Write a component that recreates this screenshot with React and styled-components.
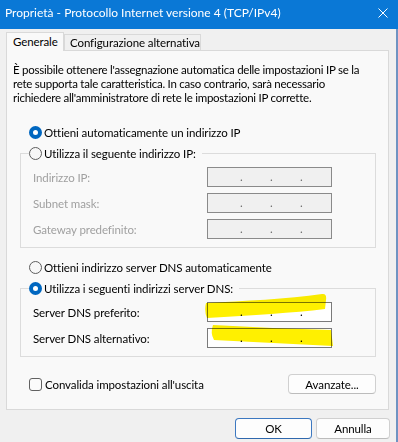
import React from "react";
import styled, { createGlobalStyle } from "styled-components";

const Global = createGlobalStyle`
  html, body {
    margin: 0;
    padding: 0;
    background: #f0f0f0;
  }
  body {
    font-family: "Lato", "Noto Sans", sans-serif;
    font-size: 11.5px;
    letter-spacing: -0.1px;
    white-space: nowrap;
    color: #000;
  }
`;

const Window = styled.div`
  width: 398px;
  height: 442px;
  display: flex;
  flex-direction: column;
  background: #f0f0f0;
  overflow: hidden;
`;

const TitleBar = styled.div`
  flex: none;
  height: 29px;
  box-sizing: border-box;
  display: flex;
  align-items: center;
  justify-content: space-between;
  padding: 0 10px 4px 5px;
  background: #0a78d6;
  color: #fff;
  font-size: 12px;
  letter-spacing: 0;
`;

const Body = styled.div`
  flex: 1;
  display: flex;
  flex-direction: column;
  padding: 3px 7px 0 6px;
  border-right: 2px solid #6f93c2;
`;

const Tabs = styled.div`
  display: flex;
  align-items: flex-end;
  height: 18px;
`;

const Tab = styled.div`
  box-sizing: border-box;
  width: ${(p) => p.$w}px;
  height: ${(p) => (p.$active ? 19 : 16)}px;
  display: flex;
  align-items: center;
  padding: ${(p) => (p.$active ? "0 0 1px 6px" : "0 0 0 5px")};
  margin-bottom: ${(p) => (p.$active ? -1 : 0)}px;
  border: 1px solid #d9d9d9;
  border-bottom: none;
  background: ${(p) => (p.$active ? "#f9f9f9" : "#f0f0f0")};
  position: relative;
  z-index: ${(p) => (p.$active ? 1 : 0)};
`;

const Panel = styled.div`
  display: flex;
  flex-direction: column;
  padding: 12px 0 15px 0;
  border: 1px solid #d9d9d9;
  background: #f9f9f9;
`;

const Description = styled.p`
  margin: 0 0 0 6px;
  line-height: 14px;
  letter-spacing: -0.25px;
`;

const OptionRow = styled.label`
  display: flex;
  align-items: center;
  gap: 2px;
  height: 16px;
  margin: ${(p) => p.$top}px 0 0 22px;
`;

const Radio = styled.span`
  box-sizing: border-box;
  width: 13px;
  height: 13px;
  border-radius: 50%;
  flex: none;
  border: ${(p) => (p.$checked ? "4px solid #0067c0" : "1px solid #5d5d5d")};
  background: ${(p) => (p.$checked ? "#fff" : "#f7f7f7")};
`;

const Group = styled.fieldset`
  margin: 5px 12px 0 13px;
  padding: 6px 12px 8px 12px;
  border: 1px solid #dcdcdc;
  min-width: 0;
  position: relative;
`;

const Legend = styled.legend`
  display: flex;
  align-items: center;
  gap: 2px;
  height: 16px;
  padding: 0 6px 0 0;
  margin-left: -4px;
`;

const Rows = styled.div`
  display: grid;
  grid-template-columns: 174px 125px;
  row-gap: 6px;
  align-items: center;
  position: relative;
`;

const FieldLabel = styled.span`
  color: ${(p) => (p.$disabled ? "#a0a0a0" : "#000")};
`;

const IpBox = styled.div`
  box-sizing: border-box;
  height: 20px;
  display: flex;
  align-items: center;
  padding-left: 4px;
  border: 1px solid ${(p) => (p.$disabled ? "#8a8a8a" : "#7a7a7a")};
  background: ${(p) => (p.$disabled ? "#f0f0f0" : "#fff")};
  color: ${(p) => (p.$disabled ? "#6d6d6d" : "#000")};
  line-height: 18px;
`;

const Octet = styled.span`
  width: 28px;
`;

const Dot = styled.span`
  width: 2px;
  text-align: center;
`;

const Highlight = styled.svg`
  position: absolute;
  left: 170px;
  top: -10px;
  width: 135px;
  height: 60px;
  mix-blend-mode: multiply;
  pointer-events: none;
`;

const BottomRow = styled.div`
  display: flex;
  align-items: center;
  justify-content: space-between;
  margin: 17px 12px 0 22px;
`;

const CheckLabel = styled.label`
  display: flex;
  align-items: center;
  gap: 3px;
`;

const Checkbox = styled.span`
  box-sizing: border-box;
  width: 13px;
  height: 13px;
  border: 1px solid #616161;
  border-radius: 3px;
  background: #fbfbfb;
`;

const Button = styled.button`
  box-sizing: border-box;
  width: ${(p) => p.$w}px;
  height: ${(p) => p.$h}px;
  padding: 0;
  font: inherit;
  letter-spacing: inherit;
  color: #000;
  background: #fdfdfd;
  border: 1px solid ${(p) => (p.$default ? "#3c78c0" : "#d0d0d0")};
  border-bottom-color: ${(p) => (p.$default ? "#2f68ad" : "#bcbcbc")};
  border-radius: 4px;
`;

const Footer = styled.div`
  display: flex;
  justify-content: flex-end;
  gap: 4px;
  margin: 8px -1px 0 0;
`;

function IpField({ disabled }) {
  return (
    <IpBox $disabled={disabled}>
      <Octet />
      <Dot>.</Dot>
      <Octet />
      <Dot>.</Dot>
      <Octet />
      <Dot>.</Dot>
      <Octet />
    </IpBox>
  );
}

const ipRows = ["Indirizzo IP:", "Subnet mask:", "Gateway predefinito:"];
const dnsRows = ["Server DNS preferito:", "Server DNS alternativo:"];

export default function App() {
  return (
    <Window>
      <Global />
      <TitleBar>
        <span>Proprietà - Protocollo Internet versione 4 (TCP/IPv4)</span>
        <svg width="10" height="10" viewBox="0 0 10 10">
          <path d="M0.5 0.5L9.5 9.5M9.5 0.5L0.5 9.5" stroke="#fff" strokeWidth="1" />
        </svg>
      </TitleBar>
      <Body>
        <Tabs>
          <Tab $active $w={58}>Generale</Tab>
          <Tab $w={137}>Configurazione alternativa</Tab>
        </Tabs>
        <Panel>
          <Description>
            È possibile ottenere l'assegnazione automatica delle impostazioni IP se la
            <br />
            rete supporta tale caratteristica. In caso contrario, sarà necessario
            <br />
            richiedere all'amministratore di rete le impostazioni IP corrette.
          </Description>

          <OptionRow $top={19}>
            <Radio $checked />
            Ottieni automaticamente un indirizzo IP
          </OptionRow>
          <Group>
            <Legend>
              <Radio />
              Utilizza il seguente indirizzo IP:
            </Legend>
            <Rows>
              {ipRows.map((l) => (
                <React.Fragment key={l}>
                  <FieldLabel $disabled>{l}</FieldLabel>
                  <IpField disabled />
                </React.Fragment>
              ))}
            </Rows>
          </Group>

          <OptionRow $top={11}>
            <Radio />
            Ottieni indirizzo server DNS automaticamente
          </OptionRow>
          <Group>
            <Legend>
              <Radio $checked />
              Utilizza i seguenti indirizzi server DNS:
            </Legend>
            <Rows>
              {dnsRows.map((l) => (
                <React.Fragment key={l}>
                  <FieldLabel>{l}</FieldLabel>
                  <IpField />
                </React.Fragment>
              ))}
              {/* yellow marker strokes over the DNS fields */}
              <Highlight viewBox="0 0 135 60">
                <path
                  d="M3 11 C40 9 85 7 119 2 Q124 1 123 8 L122 17 C90 21 50 23 4 26 Q1 19 3 11 Z"
                  fill="#fff000"
                />
                <path
                  d="M10 33 C50 35 90 37 128 38 L130 54 C90 52 50 50 11 48 Q7 41 10 33 Z"
                  fill="#fff000"
                />
              </Highlight>
            </Rows>
          </Group>

          <BottomRow>
            <CheckLabel>
              <Checkbox />
              Convalida impostazioni all'uscita
            </CheckLabel>
            <Button $w={88} $h={20}>Avanzate...</Button>
          </BottomRow>
        </Panel>
        <Footer>
          <Button $default $w={77} $h={21}>OK</Button>
          <Button $w={74} $h={21}>Annulla</Button>
        </Footer>
      </Body>
    </Window>
  );
}
